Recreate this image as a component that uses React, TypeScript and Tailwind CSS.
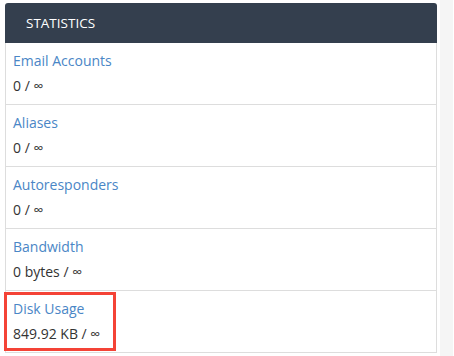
const stats = [
  { label: "Email Accounts", value: "0 / ∞" },
  { label: "Aliases", value: "0 / ∞" },
  { label: "Autoresponders", value: "0 / ∞" },
  { label: "Bandwidth", value: "0 bytes / ∞" },
  { label: "Disk Usage", value: "849.92 KB / ∞", highlight: true },
];

export default function App() {
  return (
    <div
      className="flex h-[356px] w-[454px] overflow-hidden bg-white"
      style={{ fontFamily: '"Open Sans", "Liberation Sans", sans-serif' }}
    >
      <div className="ml-[5px] mt-[3px] w-[432px] shrink-0">
        <div className="flex h-[40px] items-center rounded-t-[3px] bg-[#343f4e] pl-[21px] text-[13.5px] text-white">
          STATISTICS
        </div>
        <div className="border-x border-[#dddddd]">
          {stats.map((s) => (
            <div key={s.label} className="relative h-[62px] border-b border-[#dddddd] pl-[7px] pt-[8px]">
              {s.highlight && (
                <div className="absolute left-[-2px] top-[1px] h-[59px] w-[112px] border-[3px] border-[#f44336]" />
              )}
              <div className="text-[14px] leading-[20px] text-[#4a86c6]">{s.label}</div>
              <div className="mt-[5px] text-[14px] leading-[20px] text-[#333333]">{s.value}</div>
            </div>
          ))}
        </div>
      </div>
      <div className="ml-[3px] w-[13px] shrink-0 bg-[#f5f5f5]" />
    </div>
  );
}
